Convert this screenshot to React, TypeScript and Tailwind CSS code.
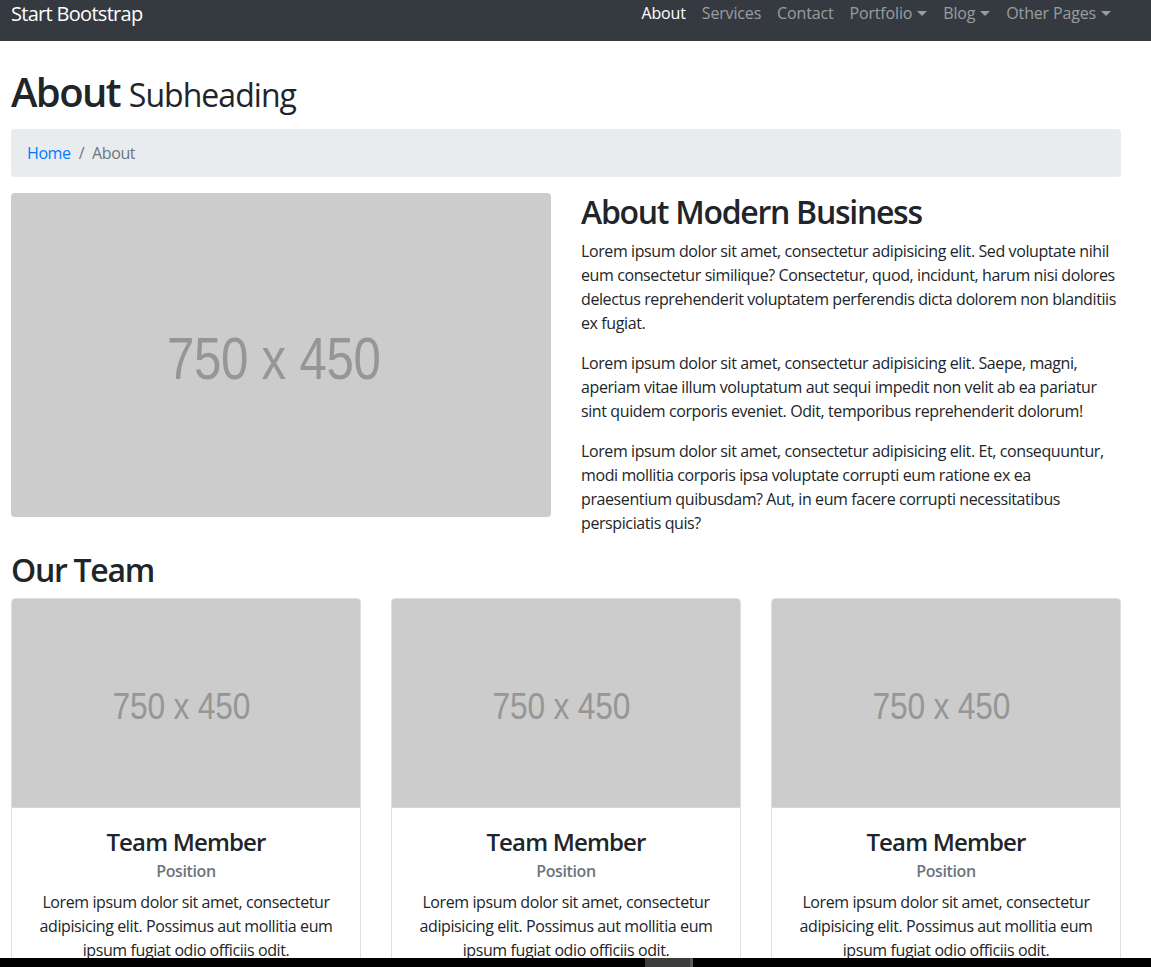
import React from 'react'

const lorem1 =
  'Lorem ipsum dolor sit amet, consectetur adipisicing elit. Sed voluptate nihil eum consectetur similique? Consectetur, quod, incidunt, harum nisi dolores delectus reprehenderit voluptatem perferendis dicta dolorem non blanditiis ex fugiat.'
const lorem2 =
  'Lorem ipsum dolor sit amet, consectetur adipisicing elit. Saepe, magni, aperiam vitae illum voluptatum aut sequi impedit non velit ab ea pariatur sint quidem corporis eveniet. Odit, temporibus reprehenderit dolorum!'
const lorem3 =
  'Lorem ipsum dolor sit amet, consectetur adipisicing elit. Et, consequuntur, modi mollitia corporis ipsa voluptate corrupti eum ratione ex ea praesentium quibusdam? Aut, in eum facere corrupti necessitatibus perspiciatis quis?'
const memberText =
  'Lorem ipsum dolor sit amet, consectetur adipisicing elit. Possimus aut mollitia eum ipsum fugiat odio officiis odit.'

function Placeholder({ className }: { className?: string }) {
  return (
    <svg viewBox="0 0 750 450" className={className}>
      <rect width="750" height="450" fill="#cccccc" />
      <text
        x="365"
        y="258"
        textAnchor="middle"
        fontFamily="'Liberation Sans', Arial, sans-serif"
        fontSize="81"
        fill="#969696"
        textLength="297"
        lengthAdjust="spacingAndGlyphs"
      >
        750 x 450
      </text>
    </svg>
  )
}

function Caret() {
  return (
    <span className="ml-[5px] inline-block align-[3px] border-x-[5px] border-t-[5px] border-x-transparent border-t-current" />
  )
}

export default function App() {
  const links = [
    { label: 'About', active: true },
    { label: 'Services' },
    { label: 'Contact' },
    { label: 'Portfolio', caret: true },
    { label: 'Blog', caret: true },
    { label: 'Other Pages', caret: true },
  ]

  return (
    <div className="h-[967px] overflow-hidden flex flex-col bg-white text-[#212529] font-['Open_Sans',sans-serif] tracking-[-0.025em]">
      <nav className="h-[41px] shrink-0 bg-[#343a40] flex items-start justify-between pl-[11px] pr-[32px]">
        <span className="text-[20px] leading-[30px] text-white -mt-[1px] tracking-[-0.035em]">Start Bootstrap</span>
        <ul className="flex text-[16px] leading-6 pt-[1px] tracking-[-0.01em]">
          {links.map((l) => (
            <li
              key={l.label}
              className={'px-2 ' + (l.active ? 'text-white' : 'text-white/50')}
            >
              {l.label}
              {l.caret && <Caret />}
            </li>
          ))}
        </ul>
      </nav>

      <main className="flex-1 overflow-hidden pl-[11px] w-[1121px]">
        <h1 className="mt-6 pt-[3px] mb-[13px] text-[40px] leading-[1.2] font-semibold tracking-[-0.04em]">
          About <small className="text-[32px] font-normal tracking-[-0.03em]">Subheading</small>
        </h1>

        <ol className="flex h-12 items-center px-4 mb-4 bg-[#e9ecef] rounded text-[16px]">
          <li className="text-[#007bff]">Home</li>
          <li className="px-2 text-[#6c757d]">/</li>
          <li className="text-[#6c757d]">About</li>
        </ol>

        <div className="flex gap-[30px]">
          <div className="w-[540px] shrink-0">
            <Placeholder className="w-[540px] h-[324px] rounded block" />
          </div>
          <div className="w-[540px] text-[16px] leading-6">
            <h2 className="text-[32px] leading-[1.2] font-semibold tracking-[-0.04em] mb-2">About Modern Business</h2>
            <p className="mb-4">{lorem1}</p>
            <p className="mb-4">{lorem2}</p>
            <p className="mb-4">{lorem3}</p>
          </div>
        </div>

        <h2 className="text-[32px] leading-[1.2] font-semibold tracking-[-0.04em] mb-2">Our Team</h2>

        <div className="grid grid-cols-3 gap-[30px]">
          {[0, 1, 2].map((i) => (
            <div key={i} className="border border-black/[0.125] rounded overflow-hidden text-center">
              <Placeholder className="w-full block" />
              <div className="p-5">
                <h4 className="text-[24px] leading-[1.2] font-semibold tracking-[-0.035em] mb-3">Team Member</h4>
                <h6 className="text-[16px] leading-[1.2] font-semibold text-[#6c757d] -mt-1.5 mb-2">Position</h6>
                <p className="text-[16px] leading-6">{memberText}</p>
              </div>
            </div>
          ))}
        </div>
      </main>

      <div className="h-[9px] shrink-0 bg-black flex">
        <div className="ml-[645px] w-[45px] bg-[#3c3c3c]" />
        <div className="w-[3px] bg-[#5a5a5a]" />
      </div>
    </div>
  )
}
